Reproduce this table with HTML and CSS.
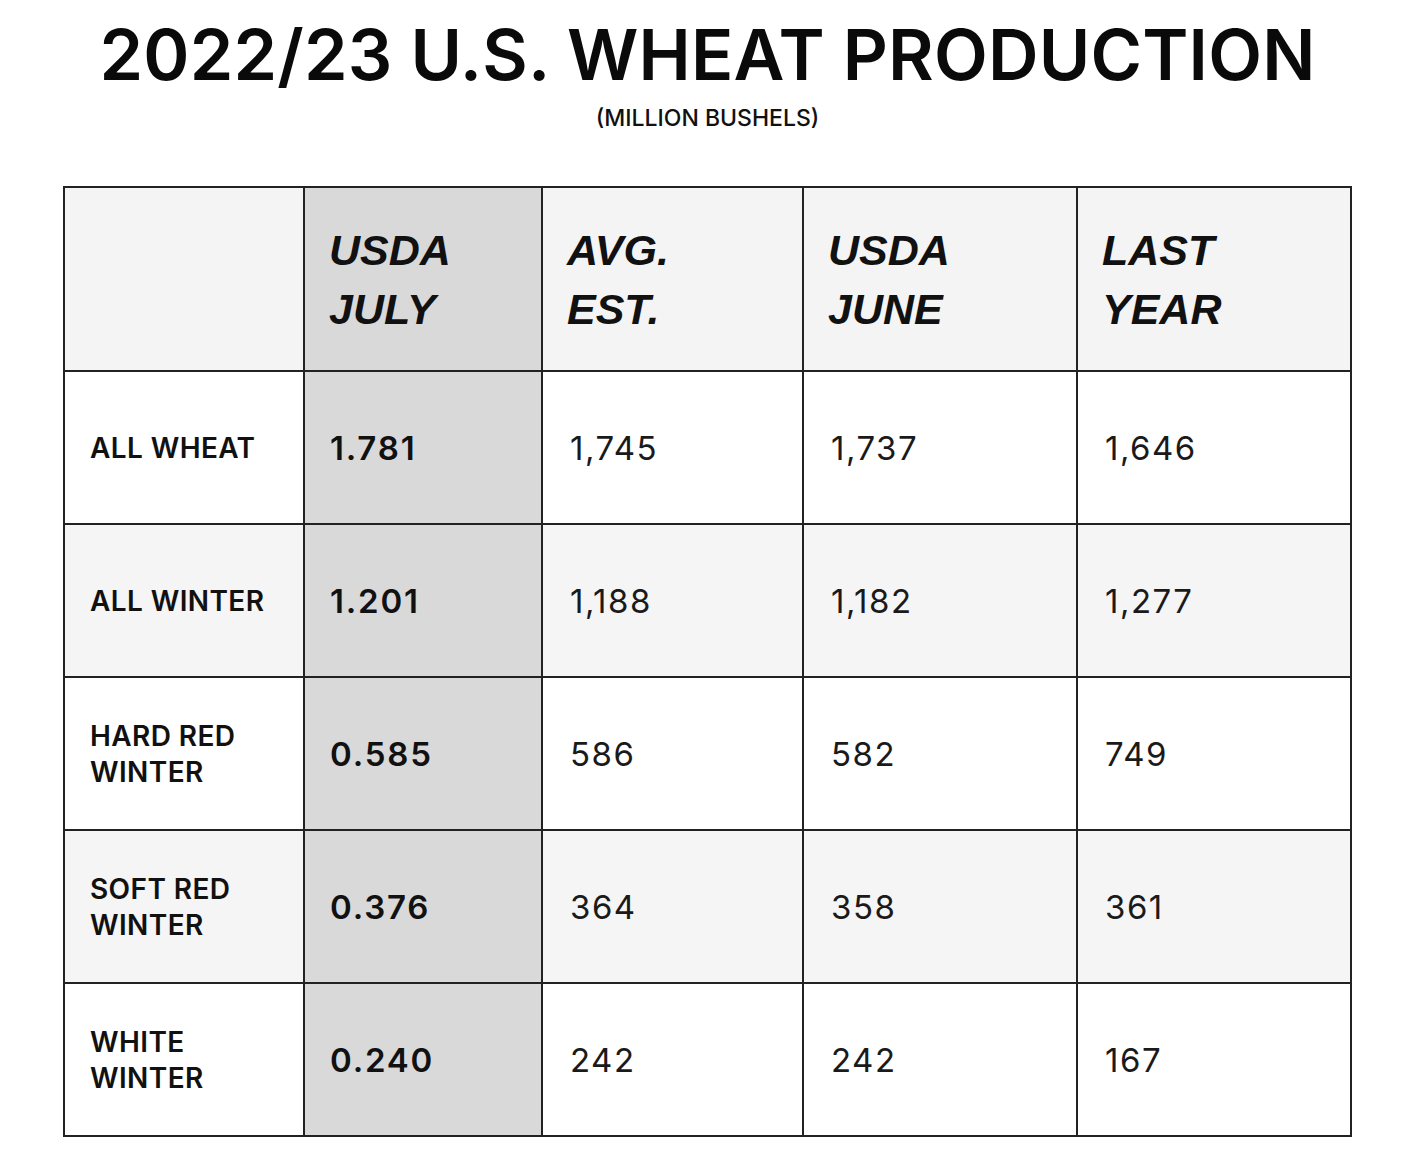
FILE: index.html
```html
<!DOCTYPE html>
<html lang="en">
<head>
<meta charset="utf-8">
<title>2022/23 U.S. Wheat Production</title>
<link rel="stylesheet" href="styles.css">
</head>
<body>
<header class="head">
  <h1 class="title">2022/23 U.S. WHEAT PRODUCTION</h1>
  <p class="subtitle">(MILLION BUSHELS)</p>
</header>
<table class="grid">
  <colgroup>
    <col class="c0"><col class="c1"><col class="c2"><col class="c3"><col class="c4">
  </colgroup>
  <thead>
    <tr class="hrow">
      <th class="corner"></th>
      <th class="hl">USDA<br>JULY</th>
      <th>AVG.<br>EST.</th>
      <th>USDA<br>JUNE</th>
      <th>LAST<br>YEAR</th>
    </tr>
  </thead>
  <tbody>
    <tr class="odd">
      <td class="lab">ALL WHEAT</td><td class="hl num b">1.781</td><td class="num">1,745</td><td class="num">1,737</td><td class="num">1,646</td>
    </tr>
    <tr class="even">
      <td class="lab">ALL WINTER</td><td class="hl num b">1.201</td><td class="num">1,188</td><td class="num">1,182</td><td class="num">1,277</td>
    </tr>
    <tr class="odd">
      <td class="lab">HARD RED<br>WINTER</td><td class="hl num b">0.585</td><td class="num">586</td><td class="num">582</td><td class="num">749</td>
    </tr>
    <tr class="even">
      <td class="lab">SOFT RED<br>WINTER</td><td class="hl num b">0.376</td><td class="num">364</td><td class="num">358</td><td class="num">361</td>
    </tr>
    <tr class="odd">
      <td class="lab">WHITE<br>WINTER</td><td class="hl num b">0.240</td><td class="num">242</td><td class="num">242</td><td class="num">167</td>
    </tr>
  </tbody>
</table>
</body>
</html>
```
FILE: styles.css
```css
* { box-sizing: border-box; }
html, body { margin: 0; padding: 0; background: #ffffff; }
body {
  color: #0d0d0d;
  font-family: "Inter", "Liberation Sans", sans-serif;
  padding: 0 62px 0 63px;
}
.head { text-align: center; }
.title {
  margin: 0;
  padding-top: 15px;
  font-family: "Inter", "Liberation Sans", sans-serif;
  font-weight: 600;
  font-size: 70px;
  line-height: 80px;
  letter-spacing: 0.2px;
  color: #0a0a0a;
}
.subtitle {
  margin: 11px 0 0 0;
  font-family: "Inter", "Liberation Sans", sans-serif;
  font-weight: 500;
  font-size: 23px;
  line-height: 24px;
  color: #111;
}
.grid {
  margin-top: 56px;
  width: 1287px;
  border-collapse: collapse;
  table-layout: fixed;
  border: 2px solid #222;
}
.c0 { width: 240px; }
.c1 { width: 238px; }
.c2 { width: 261px; }
.c3 { width: 274px; }
.c4 { width: 274px; }
.grid th, .grid td {
  border: 2px solid #222;
  text-align: left;
  vertical-align: middle;
  padding: 0 0 0 25px;
}
.hrow th {
  height: 184px;
  background: #f4f4f4;
  font-family: "Liberation Sans", "Arial", sans-serif;
  font-style: italic;
  font-weight: 700;
  font-size: 43px;
  line-height: 59px;
  color: #111;
  padding-left: 24px;
  padding-top: 2px;
  padding-bottom: 0;
}
.grid tbody td { height: 153px; }
.odd td { background: #ffffff; }
.even td { background: #f5f5f5; }
.grid .hl { background: #d9d9d9; }
.lab {
  font-family: "Inter", "Liberation Sans", sans-serif;
  font-weight: 600;
  font-size: 28px;
  line-height: 36px;
  letter-spacing: 0.4px;
  color: #111;
}
.grid .num {
  font-family: "Inter", "Liberation Sans", sans-serif;
  font-weight: 400;
  font-size: 33px;
  line-height: 36px;
  letter-spacing: 1.5px;
  color: #1a1a1a;
  padding-left: 27px;
}
.grid .num.b { font-weight: 600; color: #111; letter-spacing: 1.8px; padding-left: 25px; }
```
